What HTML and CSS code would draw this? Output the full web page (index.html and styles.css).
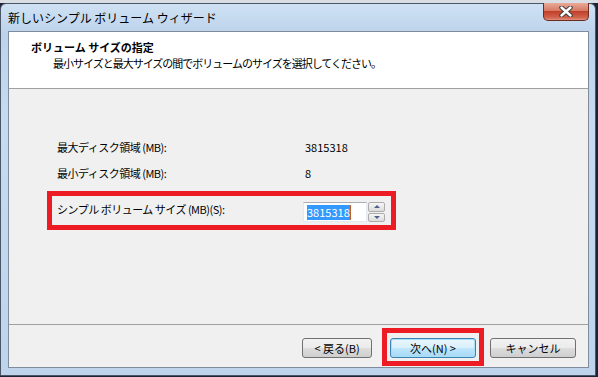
FILE: index.html
```html
<!DOCTYPE html>
<html lang="ja">

<head>
    <meta charset="UTF-8">
    <title>新しいシンプル ボリューム ウィザード</title>
    <link rel="stylesheet" href="styles.css">
</head>

<body>
    <div class="window">
        <div class="titlebar">
            <span class="title">新しいシンプル ボリューム ウィザード</span>
            <button class="close" type="button">
                <svg width="14" height="11" viewBox="0 0 14 11">
                    <path d="M2.5 1.5 L11.5 9.5 M11.5 1.5 L2.5 9.5" stroke="#3b3b3b" stroke-width="4.4" stroke-linecap="round" />
                    <path d="M2.5 1.5 L11.5 9.5 M11.5 1.5 L2.5 9.5" stroke="#ffffff" stroke-width="2.4" stroke-linecap="round" />
                </svg>
            </button>
        </div>

        <div class="client">
            <div class="header">
                <div class="header-title">ボリューム サイズの指定</div>
                <div class="header-sub">最小サイズと最大サイズの間でボリュームのサイズを選択してください。</div>
            </div>

            <div class="content">
                <div class="row">
                    <span class="label">最大ディスク領域 (MB):</span>
                    <span class="value">3815318</span>
                </div>
                <div class="row">
                    <span class="label">最小ディスク領域 (MB):</span>
                    <span class="value">8</span>
                </div>
                <div class="row size-row">
                    <span class="label">シンプル ボリューム サイズ (MB)(S):</span>
                    <div class="spin-field">
                        <div class="field"><span class="selected">3815318</span></div>
                        <div class="spinner">
                            <span class="spin up"></span>
                            <span class="spin down"></span>
                        </div>
                    </div>
                </div>
            </div>

            <div class="footer">
                <button class="btn" type="button">&lt; 戻る(B)</button>
                <span class="highlight"><button class="btn default" type="button">次へ(N) &gt;</button></span>
                <button class="btn cancel" type="button">キャンセル</button>
            </div>
        </div>
    </div>
</body>

</html>
```

FILE: styles.css
```css
body {
    margin: 0;
    padding-top: 3px;
    font-family: "Noto Sans CJK JP", "Noto Sans", sans-serif;
    font-size: 11px;
    color: #000;
    background: linear-gradient(to bottom, #d9dee4 0, #d9dee4 3px, #1d2337 3px);
    height: 377px;
    box-sizing: border-box;
    overflow: hidden;
}

.window {
    width: 596px;
    height: 373px;
    box-sizing: border-box;
    border: 1px solid #4a5566;
    border-radius: 6px 6px 0 0;
    background: linear-gradient(to bottom, #cfe1f4, #bcd3eb 30px, #c6dbf1 120px, #bdd4ec);
}

.titlebar {
    height: 27px;
    display: flex;
    align-items: center;
    padding: 0 6px 0 7px;
}

.title {
    font-size: 12px;
    line-height: 16px;
    color: #000;
}

.close {
    margin-left: auto;
    align-self: flex-start;
    margin-top: -1px;
    width: 46px;
    height: 18px;
    padding: 0;
    border: 1px solid #6b2c22;
    border-top: none;
    border-radius: 0 0 5px 5px;
    background: linear-gradient(to bottom, #e9a998, #d67a64 45%, #c2402a 50%, #d0634c 85%, #e29080);
    display: flex;
    align-items: center;
    justify-content: center;
}

.client {
    margin: 0 6px 0 7px;
    border: 1px solid #7f8c9b;
    background: #f0f0f0;
}

.header {
    height: 57px;
    background: #fff;
    border-bottom: 1px solid #a0a0a0;
    padding-top: 7px;
    box-sizing: border-box;
}

.header-title {
    font-weight: bold;
    line-height: 16px;
    padding-left: 22px;
}

.header-sub {
    line-height: 16px;
    padding-left: 44px;
    letter-spacing: -1px;
}

.content {
    height: 236px;
    box-sizing: border-box;
    padding-top: 50px;
    border-bottom: 1px solid #a0a0a0;
}

.row {
    display: flex;
    line-height: 16px;
    height: 16px;
    margin-left: 48px;
    margin-bottom: 10px;
}

.label {
    width: 248px;
    letter-spacing: -0.5px;
}

.size-row {
    width: 334px;
    height: 29px;
    margin: 1px 0 0 38px;
    border: 5px solid #ed1c24;
    padding-left: 5px;
    align-items: flex-start;
}

.size-row .label {
    width: 246px;
    padding-top: 5px;
}

.spin-field {
    display: flex;
    margin-top: 6px;
}

.field {
    width: 64px;
    height: 20px;
    box-sizing: border-box;
    border: 1px solid #e3e9ef;
    border-top-color: #abadb3;
    background: #fff;
    padding: 1px 0 0 3px;
}

.selected {
    display: inline-block;
    background: #3399ff;
    color: #fff;
    line-height: 15px;
    height: 15px;
    border-right: 1px solid #c0602a;
}

.spinner {
    width: 17px;
    height: 20px;
    margin-left: 1px;
    display: flex;
    flex-direction: column;
    gap: 1px;
}

.spin {
    flex: 1;
    border: 1px solid #acacac;
    border-radius: 2px;
    background: linear-gradient(to bottom, #f6f6f6, #dcdcdc);
    display: flex;
    align-items: center;
    justify-content: center;
}

.spin::after {
    content: "";
    border-left: 3px solid transparent;
    border-right: 3px solid transparent;
}

.up::after {
    border-bottom: 3px solid #4d6185;
}

.down::after {
    border-top: 3px solid #4d6185;
}

.footer {
    height: 42px;
    display: flex;
    align-items: flex-start;
    padding: 3px 12px 0 0;
    justify-content: flex-end;
    box-sizing: border-box;
}

.btn {
    font-family: "Noto Sans CJK JP", "Noto Sans", sans-serif;
    font-size: 11px;
    line-height: 16px;
    height: 20px;
    padding: 0;
    border: 1px solid #707070;
    border-radius: 3px;
    background: linear-gradient(to bottom, #f2f2f2, #ebebeb 50%, #dddddd 50%, #cfcfcf);
    color: #000;
    width: 70px;
    margin-top: 10px;
}

.highlight {
    border: 5px solid #ed1c24;
    padding: 5px 3px 3px;
    margin-left: 10px;
}

.btn.default {
    width: 86px;
    margin-top: 0;
    border-color: #3c7fb1;
    box-shadow: inset 0 0 0 1px #a5e0f7;
    background: linear-gradient(to bottom, #eaf6fd, #d9f0fc 50%, #bee6fd 50%, #a7d9f5);
}

.btn.cancel {
    width: 86px;
    margin-left: 6px;
}
```
